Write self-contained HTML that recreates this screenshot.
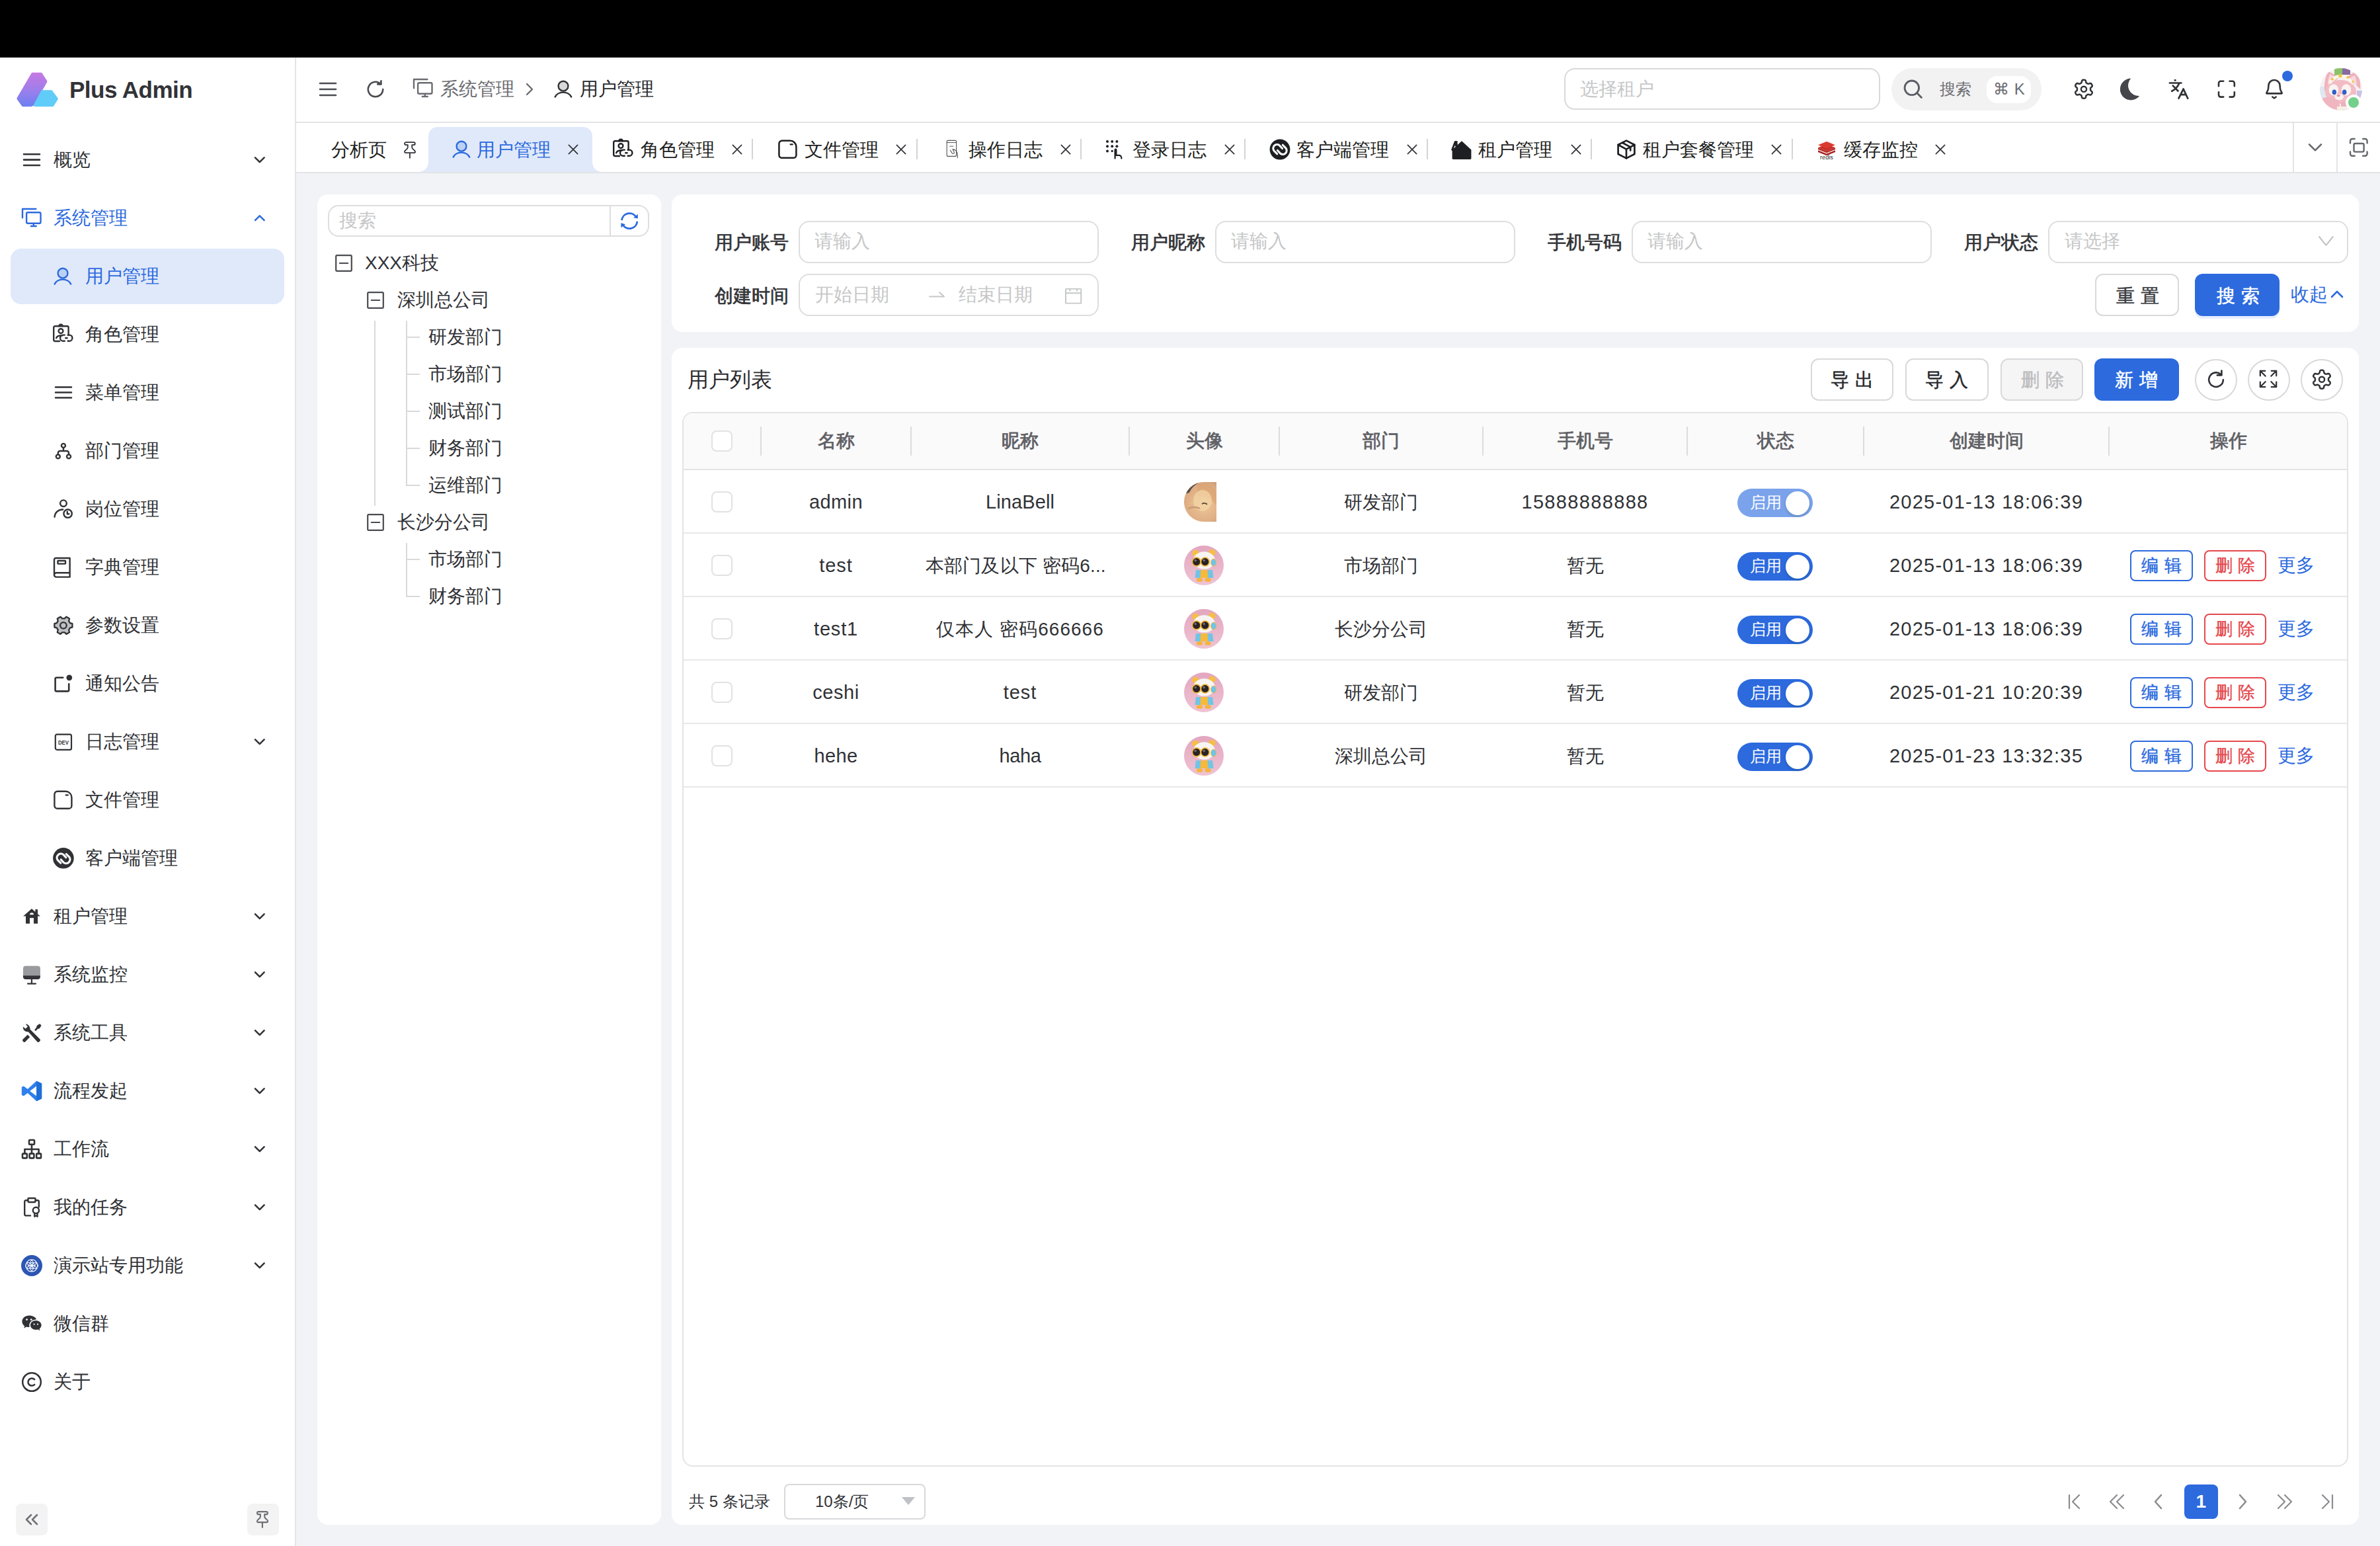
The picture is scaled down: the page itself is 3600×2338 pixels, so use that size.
<!DOCTYPE html>
<html><head><meta charset="utf-8"><style>
html,body{margin:0;padding:0;background:#000;width:3600px;height:2338px;overflow:hidden}
#z{zoom:2;position:absolute;left:0;top:0;width:1800px;height:1169px;background:#000}
#app{position:absolute;left:0;top:43px;width:1800px;height:1126px;background:#f1f3f6;font-family:"Liberation Sans",sans-serif;color:#303236;font-size:14px;overflow:hidden}
.a{position:absolute;display:block}
.t{position:absolute;white-space:nowrap;line-height:20px}
.side{position:absolute;left:0;top:0;width:223px;height:1126px;background:#fff;border-right:1px solid #e4e4e7}
.hdr{position:absolute;left:224px;top:0;width:1576px;height:49px;background:#fff;border-bottom:1px solid #e4e4e7}
.tabs{position:absolute;left:224px;top:50px;width:1576px;height:37px;background:#fff;border-bottom:1px solid #e4e4e7}
.card{position:absolute;background:#fff;border-radius:8px}
.box{position:absolute;box-sizing:border-box}
</style></head><body>
<div id="z"><div id="app">
<div class="side">
<svg class="a" style="left:12px;top:11px" width="34" height="28" viewBox="0 0 34 28">
<defs><linearGradient id="lg1" x1="0" y1="0" x2="0" y2="1"><stop offset="0" stop-color="#c479e4"/><stop offset=".55" stop-color="#9a7fec"/><stop offset="1" stop-color="#6f7ff0"/></linearGradient></defs>
<path d="M12.6 1.9h6.4l3.7 5.7-10 17.5-1.2.5H5.3l-3.6-5.1z" fill="url(#lg1)" stroke="url(#lg1)" stroke-width="2" stroke-linejoin="round"/>
<path d="M20 15.1h6.7l4.2 5.6-3.1 4.9H14.4z" fill="#60ccf8" stroke="#60ccf8" stroke-width="2" stroke-linejoin="round"/>
</svg>
<div class="t" style="left:52.5px;top:13px;font-size:17.5px;color:#323338;font-weight:700;line-height:24px;letter-spacing:-0.25px">Plus Admin</div>
<svg class="a" style="left:16px;top:70px;color:#303236" width="16" height="16" viewBox="0 0 16 16" fill="none" stroke="currentColor" stroke-width="1.2" stroke-linecap="round" stroke-linejoin="round" overflow="visible"><path d="M2 3.6h12M2 7.8h12M2 12h12" stroke-width="1.3"/></svg>
<div class="t" style="left:40.5px;top:68px;font-size:14px;color:#303236;">概览</div>
<svg class="a" style="left:192px;top:75.1px;color:#303236" width="9" height="6" viewBox="0 0 9 6" fill="none" stroke="currentColor" stroke-width="1.2" stroke-linecap="round" stroke-linejoin="round" overflow="visible"><path d="M1 1.2l3.4 3.4 3.4-3.4" stroke-width="1.25"/></svg>
<svg class="a" style="left:16px;top:114px;color:#2c6ade" width="16" height="16" viewBox="0 0 16 16" fill="none" stroke="currentColor" stroke-width="1.2" stroke-linecap="round" stroke-linejoin="round" overflow="visible"><path d="M1 7.6V1h10.2"/><rect x="4.05" y="3.6" width="10.7" height="8.3" rx="1"/><path d="M9.4 12v1.9M7.4 14h4"/></svg>
<div class="t" style="left:40.5px;top:112px;font-size:14px;color:#2c6ade;">系统管理</div>
<svg class="a" style="left:192px;top:119.1px;color:#2c6ade" width="9" height="6" viewBox="0 0 9 6" fill="none" stroke="currentColor" stroke-width="1.2" stroke-linecap="round" stroke-linejoin="round" overflow="visible"><path d="M1 4.6l3.4-3.4 3.4 3.4" stroke-width="1.25"/></svg>
<div class="box" style="left:8px;top:145px;width:207px;height:42px;border-radius:8px;background:#e0e9fa"></div>
<svg class="a" style="left:40px;top:158px;color:#2c6ade" width="16" height="16" viewBox="0 0 16 16" fill="none" stroke="currentColor" stroke-width="1.2" stroke-linecap="round" stroke-linejoin="round" overflow="visible"><circle cx="7.5" cy="5.6" r="3.7" fill="#bcd0f3"/><path d="M1.3 13.8C2.5 11.5 4.6 10.3 7.45 10.3S12.4 11.5 13.6 13.8"/></svg>
<div class="t" style="left:64.5px;top:156px;font-size:14px;color:#2c6ade;">用户管理</div>
<svg class="a" style="left:40px;top:202px;color:#303236" width="16" height="16" viewBox="0 0 16 16" fill="none" stroke="currentColor" stroke-width="1.2" stroke-linecap="round" stroke-linejoin="round" overflow="visible"><path d="M5 13H1.6a1 1 0 0 1-1-1V2.6a1 1 0 0 1 1-1h9.2a1 1 0 0 1 1 1v5.9"/><path d="M4.7 1.6a1.3 1.3 0 0 1 2.6 0"/><circle cx="6" cy="5.3" r="1.7"/><path d="M2.6 10.6c.3-1.3 1.8-2 4.6-2"/><path d="M8.9 8.3H7.8a2.3 2.3 0 0 0 0 4.6h1.1M11.3 8.3h1.1a2.3 2.3 0 0 1 0 4.6h-1.1M9.6 10.6h1.2"/></svg>
<div class="t" style="left:64.5px;top:200px;font-size:14px;color:#303236;">角色管理</div>
<svg class="a" style="left:40px;top:246px;color:#303236" width="16" height="16" viewBox="0 0 16 16" fill="none" stroke="currentColor" stroke-width="1.2" stroke-linecap="round" stroke-linejoin="round" overflow="visible"><path d="M2 3.7h12M2 7.8h12M2 11.8h12" stroke-width="1.25"/></svg>
<div class="t" style="left:64.5px;top:244px;font-size:14px;color:#303236;">菜单管理</div>
<svg class="a" style="left:40px;top:290px;color:#303236" width="16" height="16" viewBox="0 0 16 16" fill="none" stroke="currentColor" stroke-width="1.2" stroke-linecap="round" stroke-linejoin="round" overflow="visible"><circle cx="7.96" cy="3.95" r="1.5"/><circle cx="3.9" cy="12.2" r="1.5"/><circle cx="12" cy="12.2" r="1.5"/><path d="M7.96 5.45V8M3.9 10.7V9.5A1.5 1.5 0 0 1 5.4 8h5.1a1.5 1.5 0 0 1 1.5 1.5v1.2"/></svg>
<div class="t" style="left:64.5px;top:288px;font-size:14px;color:#303236;">部门管理</div>
<svg class="a" style="left:40px;top:334px;color:#303236" width="16" height="16" viewBox="0 0 16 16" fill="none" stroke="currentColor" stroke-width="1.2" stroke-linecap="round" stroke-linejoin="round" overflow="visible"><circle cx="7.96" cy="3.6" r="2.4"/><path d="M1.3 13.85C1.5 10.5 4 8.3 7.6 8.25"/><circle cx="11.3" cy="11.35" r="3.1"/><path d="M10.9 9.9v1.7h1.3"/></svg>
<div class="t" style="left:64.5px;top:332px;font-size:14px;color:#303236;">岗位管理</div>
<svg class="a" style="left:40px;top:378px;color:#303236" width="16" height="16" viewBox="0 0 16 16" fill="none" stroke="currentColor" stroke-width="1.2" stroke-linecap="round" stroke-linejoin="round" overflow="visible"><path d="M1 14.3V2.2a1.2 1.2 0 0 1 1.2-1.2h10.6v14.3H2.6A1.6 1.6 0 0 1 1 13.7a1.6 1.6 0 0 1 1.6-1.6h10.2"/><rect x="3.7" y="3" width="5.8" height="2.3" rx=".3"/></svg>
<div class="t" style="left:64.5px;top:376px;font-size:14px;color:#303236;">字典管理</div>
<svg class="a" style="left:40px;top:422px;color:#303236" width="16" height="16" viewBox="0 0 16 16" fill="none" stroke="currentColor" stroke-width="1.2" stroke-linecap="round" stroke-linejoin="round" overflow="visible"><path d="M12.91 6.05 L14.71 6.55 L14.71 9.29 L12.91 9.79 L12.05 11.28 L12.52 13.09 L10.14 14.46 L8.81 13.15 L7.09 13.15 L5.76 14.46 L3.38 13.09 L3.85 11.28 L2.99 9.79 L1.19 9.29 L1.19 6.55 L2.99 6.05 L3.85 4.56 L3.38 2.75 L5.76 1.38 L7.09 2.69 L8.81 2.69 L10.14 1.38 L12.52 2.75 L12.05 4.56Z" fill="#bfc0c4" stroke-width="1.15" stroke-linejoin="round"/><circle cx="7.95" cy="7.92" r="2.4" fill="#bfc0c4" stroke-width="1.15"/></svg>
<div class="t" style="left:64.5px;top:420px;font-size:14px;color:#303236;">参数设置</div>
<svg class="a" style="left:40px;top:466px;color:#303236" width="16" height="16" viewBox="0 0 16 16" fill="none" stroke="currentColor" stroke-width="1.2" stroke-linecap="round" stroke-linejoin="round" overflow="visible"><path d="M7.6 3.4H2.8a1 1 0 0 0-1 1v8.3a1 1 0 0 0 1 1h8.3a1 1 0 0 0 1-1V8.2" stroke-width="1.3"/><circle cx="12.4" cy="3.4" r="2.2" fill="currentColor" stroke="none"/></svg>
<div class="t" style="left:64.5px;top:464px;font-size:14px;color:#303236;">通知公告</div>
<svg class="a" style="left:40px;top:510px;color:#303236" width="16" height="16" viewBox="0 0 16 16" fill="none" stroke="currentColor" stroke-width="1.2" stroke-linecap="round" stroke-linejoin="round" overflow="visible"><rect x="1.9" y="2.3" width="12.1" height="11.6" rx="1.2" stroke-width="1.1"/><text x="8" y="9.9" font-size="4.6" font-weight="700" text-anchor="middle" fill="currentColor" stroke="none" font-family="Liberation Sans" textLength="8" lengthAdjust="spacingAndGlyphs">DEV</text></svg>
<div class="t" style="left:64.5px;top:508px;font-size:14px;color:#303236;">日志管理</div>
<svg class="a" style="left:192px;top:515.1px;color:#303236" width="9" height="6" viewBox="0 0 9 6" fill="none" stroke="currentColor" stroke-width="1.2" stroke-linecap="round" stroke-linejoin="round" overflow="visible"><path d="M1 1.2l3.4 3.4 3.4-3.4" stroke-width="1.25"/></svg>
<svg class="a" style="left:40px;top:554px;color:#303236" width="16" height="16" viewBox="0 0 16 16" fill="none" stroke="currentColor" stroke-width="1.2" stroke-linecap="round" stroke-linejoin="round" overflow="visible"><path d="M9.6 1.4H3.4A2.2 2.2 0 0 0 1.2 3.6v8.6a2.2 2.2 0 0 0 2.2 2.2h8.6a2.2 2.2 0 0 0 2.2-2.2V6a4.6 4.6 0 0 0-4.6-4.6z" stroke-width="1.2"/><path d="M9.8 4.2h1.6" stroke-width="1.1"/></svg>
<div class="t" style="left:64.5px;top:552px;font-size:14px;color:#303236;">文件管理</div>
<svg class="a" style="left:40px;top:598px;color:#303236" width="16" height="16" viewBox="0 0 16 16" fill="none" stroke="currentColor" stroke-width="1.2" stroke-linecap="round" stroke-linejoin="round" overflow="visible"><circle cx="7.95" cy="7.9" r="7.9" fill="currentColor" stroke="none"/><g stroke="#fff" stroke-width="1.55" fill="none"><path d="M5.9 11.6L3.6 9.3A3 3 0 0 1 7.9 5.2L9.9 7.4"/><path d="M5.9 11.6L3.6 9.3A3 3 0 0 1 7.9 5.2L9.9 7.4" transform="rotate(180 8 8.2)"/></g></svg>
<div class="t" style="left:64.5px;top:596px;font-size:14px;color:#303236;">客户端管理</div>
<svg class="a" style="left:16px;top:642px;color:#303236" width="16" height="16" viewBox="0 0 16 16" fill="none" stroke="currentColor" stroke-width="1.2" stroke-linecap="round" stroke-linejoin="round" overflow="visible"><path fill-rule="evenodd" d="M7.97 2.08L1.57 7.8H3.5v5.54h3.01V9.16h3.01v4.18h3.01V7.8h1.94L12.53 6.1V2.57h-1.84V4.5zM6.51 6.64a1.5 1.5 0 0 1 3.01 0z" fill="currentColor" stroke="none"/></svg>
<div class="t" style="left:40.5px;top:640px;font-size:14px;color:#303236;">租户管理</div>
<svg class="a" style="left:192px;top:647.1px;color:#303236" width="9" height="6" viewBox="0 0 9 6" fill="none" stroke="currentColor" stroke-width="1.2" stroke-linecap="round" stroke-linejoin="round" overflow="visible"><path d="M1 1.2l3.4 3.4 3.4-3.4" stroke-width="1.25"/></svg>
<svg class="a" style="left:16px;top:686px;color:#303236" width="16" height="16" viewBox="0 0 16 16" fill="none" stroke="currentColor" stroke-width="1.2" stroke-linecap="round" stroke-linejoin="round" overflow="visible"><path d="M1.47 3.4a2 2 0 0 1 2-2h9a2 2 0 0 1 2 2v5.2h-13z" fill="#9a9b9e" stroke="none"/><path d="M1.47 8.6h13v.9a2 2 0 0 1-2 2h-9a2 2 0 0 1-2-2z" fill="#333438" stroke="none"/><path d="M7.97 11.5v3.3M5 14.8h6" stroke="#333438" stroke-width="1.1"/></svg>
<div class="t" style="left:40.5px;top:684px;font-size:14px;color:#303236;">系统监控</div>
<svg class="a" style="left:192px;top:691.1px;color:#303236" width="9" height="6" viewBox="0 0 9 6" fill="none" stroke="currentColor" stroke-width="1.2" stroke-linecap="round" stroke-linejoin="round" overflow="visible"><path d="M1 1.2l3.4 3.4 3.4-3.4" stroke-width="1.25"/></svg>
<svg class="a" style="left:16px;top:730px;color:#303236" width="16" height="16" viewBox="0 0 16 16" fill="none" stroke="currentColor" stroke-width="1.2" stroke-linecap="round" stroke-linejoin="round" overflow="visible"><g fill="currentColor" stroke="none"><path d="M5.1 6.9L6.7 5.3 14.2 12.8a1 1 0 0 1 0 1.4l-.6.6a1 1 0 0 1-1.4 0z"/><path d="M1.4 3.4C1.2 5.6 2.9 7.3 5.1 7.2L6.8 5.4C6.9 3.3 5.3 1.4 3.3 1.3L5 3.2 3.3 4.9z"/><path d="M4.9 9.4l1.7 1.7-3.5 3.6a1 1 0 0 1-1.4 0l-.4-.4a1 1 0 0 1 0-1.4z"/><path d="M10.1 5.6l1.5-1.7c-.1-.6.2-1.2.6-1.6l1.9-1.2 1.2 1.3-1.1 1.9c-.4.5-1 .8-1.7.7L11 6.6z"/></g></svg>
<div class="t" style="left:40.5px;top:728px;font-size:14px;color:#303236;">系统工具</div>
<svg class="a" style="left:192px;top:735.1px;color:#303236" width="9" height="6" viewBox="0 0 9 6" fill="none" stroke="currentColor" stroke-width="1.2" stroke-linecap="round" stroke-linejoin="round" overflow="visible"><path d="M1 1.2l3.4 3.4 3.4-3.4" stroke-width="1.25"/></svg>
<svg class="a" style="left:16px;top:774px;color:#303236" width="16" height="16" viewBox="0 0 16 16" fill="none" stroke="currentColor" stroke-width="1.2" stroke-linecap="round" stroke-linejoin="round" overflow="visible"><path d="M11.6.4L15.6 2.3v11.4l-4 1.9L4.9 9.5 1.9 11.8.4 11V5l1.5-.8 3 2.3z" fill="#2f80ed" stroke="none"/><path d="M11.6 4.3L6.6 8l5 3.7z" fill="#fff" stroke="none"/><path d="M11.6.4L15.6 2.3v11.4l-4 1.9z" fill="#1f6fd6" stroke="none"/></svg>
<div class="t" style="left:40.5px;top:772px;font-size:14px;color:#303236;">流程发起</div>
<svg class="a" style="left:192px;top:779.1px;color:#303236" width="9" height="6" viewBox="0 0 9 6" fill="none" stroke="currentColor" stroke-width="1.2" stroke-linecap="round" stroke-linejoin="round" overflow="visible"><path d="M1 1.2l3.4 3.4 3.4-3.4" stroke-width="1.25"/></svg>
<svg class="a" style="left:16px;top:818px;color:#303236" width="16" height="16" viewBox="0 0 16 16" fill="none" stroke="currentColor" stroke-width="1.2" stroke-linecap="round" stroke-linejoin="round" overflow="visible"><rect x="6" y="1" width="4" height="3.4" rx=".5" stroke-width="1.3"/><rect x="1" y="11.3" width="3.4" height="3.4" rx=".5" stroke-width="1.3"/><rect x="6.3" y="11.3" width="3.4" height="3.4" rx=".5" stroke-width="1.3"/><rect x="11.6" y="11.3" width="3.4" height="3.4" rx=".5" stroke-width="1.3"/><path d="M8 4.4v6.9M2.7 11.3V8h10.6v3.3" stroke-width="1.3"/></svg>
<div class="t" style="left:40.5px;top:816px;font-size:14px;color:#303236;">工作流</div>
<svg class="a" style="left:192px;top:823.1px;color:#303236" width="9" height="6" viewBox="0 0 9 6" fill="none" stroke="currentColor" stroke-width="1.2" stroke-linecap="round" stroke-linejoin="round" overflow="visible"><path d="M1 1.2l3.4 3.4 3.4-3.4" stroke-width="1.25"/></svg>
<svg class="a" style="left:16px;top:862px;color:#303236" width="16" height="16" viewBox="0 0 16 16" fill="none" stroke="currentColor" stroke-width="1.2" stroke-linecap="round" stroke-linejoin="round" overflow="visible"><path d="M7 14.2H3.6a1 1 0 0 1-1-1V3.6a1 1 0 0 1 1-1h1.6M10.8 2.6h1.6a1 1 0 0 1 1 1v4" stroke-width="1.2"/><rect x="5.2" y="1" width="5.6" height="3" rx=".6" stroke-width="1.2"/><circle cx="11.2" cy="10.2" r="2.3" stroke-width="1.2"/><path d="M10.1 12.3v2.6l1.1-.7 1.1.7v-2.6" stroke-width="1.1"/></svg>
<div class="t" style="left:40.5px;top:860px;font-size:14px;color:#303236;">我的任务</div>
<svg class="a" style="left:192px;top:867.1px;color:#303236" width="9" height="6" viewBox="0 0 9 6" fill="none" stroke="currentColor" stroke-width="1.2" stroke-linecap="round" stroke-linejoin="round" overflow="visible"><path d="M1 1.2l3.4 3.4 3.4-3.4" stroke-width="1.25"/></svg>
<svg class="a" style="left:16px;top:906px;color:#303236" width="16" height="16" viewBox="0 0 16 16" fill="none" stroke="currentColor" stroke-width="1.2" stroke-linecap="round" stroke-linejoin="round" overflow="visible"><circle cx="8" cy="8" r="8" fill="#2d56b3" stroke="none"/><circle cx="10.30" cy="8.00" r="2.3" stroke="#fff" stroke-width=".5"/><circle cx="9.15" cy="9.99" r="2.3" stroke="#fff" stroke-width=".5"/><circle cx="6.85" cy="9.99" r="2.3" stroke="#fff" stroke-width=".5"/><circle cx="5.70" cy="8.00" r="2.3" stroke="#fff" stroke-width=".5"/><circle cx="6.85" cy="6.01" r="2.3" stroke="#fff" stroke-width=".5"/><circle cx="9.15" cy="6.01" r="2.3" stroke="#fff" stroke-width=".5"/><circle cx="8" cy="8" r="4.6" stroke="#fff" stroke-width=".5"/><circle cx="8" cy="8" r="2.3" stroke="#fff" stroke-width=".5"/></svg>
<div class="t" style="left:40.5px;top:904px;font-size:14px;color:#303236;">演示站专用功能</div>
<svg class="a" style="left:192px;top:911.1px;color:#303236" width="9" height="6" viewBox="0 0 9 6" fill="none" stroke="currentColor" stroke-width="1.2" stroke-linecap="round" stroke-linejoin="round" overflow="visible"><path d="M1 1.2l3.4 3.4 3.4-3.4" stroke-width="1.25"/></svg>
<svg class="a" style="left:16px;top:950px;color:#303236" width="16" height="16" viewBox="0 0 16 16" fill="none" stroke="currentColor" stroke-width="1.2" stroke-linecap="round" stroke-linejoin="round" overflow="visible"><path d="M6 1.8C3 1.8.7 3.8.7 6.2c0 1.4.7 2.6 1.9 3.4l-.5 1.6 1.9-1c.6.2 1.3.3 2 .3h.3A4 4 0 0 1 6.2 9c0-2.3 2.2-4.2 5-4.2h.3C11 3 8.8 1.8 6 1.8z" fill="currentColor" stroke="none"/><path d="M15.3 9c0-2-1.9-3.5-4.2-3.5S7 7 7 9s1.9 3.5 4.2 3.5c.5 0 1-.1 1.5-.2l1.5.8-.4-1.3c.9-.7 1.5-1.7 1.5-2.8z" fill="currentColor" stroke="none"/><circle cx="4.3" cy="4.8" r=".7" fill="#fff" stroke="none"/><circle cx="7.6" cy="4.8" r=".7" fill="#fff" stroke="none"/><circle cx="9.8" cy="8.3" r=".55" fill="#fff" stroke="none"/><circle cx="12.5" cy="8.3" r=".55" fill="#fff" stroke="none"/></svg>
<div class="t" style="left:40.5px;top:948px;font-size:14px;color:#303236;">微信群</div>
<svg class="a" style="left:16px;top:994px;color:#303236" width="16" height="16" viewBox="0 0 16 16" fill="none" stroke="currentColor" stroke-width="1.2" stroke-linecap="round" stroke-linejoin="round" overflow="visible"><circle cx="8" cy="8" r="6.9" stroke-width="1.25"/><path d="M10.1 6.1a2.8 2.8 0 1 0 0 3.8" stroke-width="1.25"/></svg>
<div class="t" style="left:40.5px;top:992px;font-size:14px;color:#303236;">关于</div>
<div class="box" style="left:12px;top:1094px;width:24px;height:24px;border-radius:4px;background:#f3f3f4"></div>
<svg class="a" style="left:16px;top:1098px;color:#707176" width="16" height="16" viewBox="0 0 16 16" fill="none" stroke="currentColor" stroke-width="1.2" stroke-linecap="round" stroke-linejoin="round" overflow="visible"><path d="M7.5 4.5L4 8l3.5 3.5M12 4.5L8.5 8l3.5 3.5" stroke-width="1.25"/></svg>
<div class="box" style="left:187px;top:1094px;width:24px;height:24px;border-radius:4px;background:#f3f3f4"></div>
<svg class="a" style="left:190.5px;top:1098px;color:#707176" width="16" height="16" viewBox="0 0 16 16" fill="none" stroke="currentColor" stroke-width="1.2" stroke-linecap="round" stroke-linejoin="round" overflow="visible"><path d="M5 2.1h5.9a1 1 0 0 1 0 2H9.6v1.8c0 .9.5 1.3 1.3 1.8.8.5 1.1.9 1.1 1.6a.8.8 0 0 1-.8.8H4.8a.8.8 0 0 1-.8-.8c0-.7.3-1.1 1.1-1.6.8-.5 1.3-.9 1.3-1.8V4.1H5a1 1 0 0 1 0-2zM7.95 10.1v3.8" stroke-width="1.1"/></svg>
</div>
<div class="hdr"></div>
<svg class="a" style="left:240px;top:16.5px;color:#4a4b50" width="16" height="16" viewBox="0 0 16 16" fill="none" stroke="currentColor" stroke-width="1.2" stroke-linecap="round" stroke-linejoin="round" overflow="visible"><path d="M2 3.5h12M2 8h12M2 12.5h12" stroke-width="1.3"/></svg>
<svg class="a" style="left:276px;top:16.5px;color:#4a4b50" width="16" height="16" viewBox="0 0 16 16" fill="none" stroke="currentColor" stroke-width="1.2" stroke-linecap="round" stroke-linejoin="round" overflow="visible"><path d="M13.6 8A5.6 5.6 0 1 1 11.9 4" stroke-width="1.3"/><path d="M12.2 1.6v2.6H9.6" stroke-width="1.3"/></svg>
<svg class="a" style="left:312px;top:16.2px;color:#6b6c72" width="16" height="16" viewBox="0 0 16 16" fill="none" stroke="currentColor" stroke-width="1.2" stroke-linecap="round" stroke-linejoin="round" overflow="visible"><path d="M1 7.6V1h10.2"/><rect x="4.05" y="3.6" width="10.7" height="8.3" rx="1"/><path d="M9.4 12v1.9M7.4 14h4"/></svg>
<div class="t" style="left:332.75px;top:14.5px;font-size:14px;color:#6b6c72;">系统管理</div>
<svg class="a" style="left:396px;top:19.5px;color:#6b6c72" width="10" height="10" viewBox="0 0 10 10" fill="none" stroke="currentColor" stroke-width="1.2" stroke-linecap="round" stroke-linejoin="round" overflow="visible"><path d="M2.5 1l4 4-4 4" stroke-width="1.2"/></svg>
<svg class="a" style="left:418.5px;top:16.5px;color:#303236" width="16" height="16" viewBox="0 0 16 16" fill="none" stroke="currentColor" stroke-width="1.2" stroke-linecap="round" stroke-linejoin="round" overflow="visible"><circle cx="7.5" cy="5.6" r="3.7" fill="#d8d8d8"/><path d="M1.3 13.8C2.5 11.5 4.6 10.3 7.45 10.3S12.4 11.5 13.6 13.8"/></svg>
<div class="t" style="left:438.5px;top:14.5px;font-size:14px;color:#26282c;">用户管理</div>
<div class="box" style="left:1183px;top:8.7px;width:239px;height:31.5px;border:1px solid #d9d9dc;border-radius:8px;background:#fff"></div>
<div class="t" style="left:1194.8px;top:14.5px;font-size:14px;color:#c6c7c8;">选择租户</div>
<div class="box" style="left:1430.5px;top:8.7px;width:113.5px;height:31.6px;border-radius:16px;background:#f2f2f3"></div>
<svg class="a" style="left:1439px;top:16.5px;color:#5c5d63" width="16" height="16" viewBox="0 0 16 16" fill="none" stroke="currentColor" stroke-width="1.2" stroke-linecap="round" stroke-linejoin="round" overflow="visible"><circle cx="6.9" cy="6.9" r="5.4" stroke-width="1.4"/><path d="M10.9 10.9l3.3 3.3" stroke-width="1.4"/></svg>
<div class="t" style="left:1467px;top:14.5px;font-size:12px;color:#6b6c72;">搜索</div>
<div class="box" style="left:1502.4px;top:14.5px;width:33.5px;height:20.5px;border-radius:8px;background:#fff"></div>
<div class="t" style="left:1507.5px;top:14.7px;font-size:12px;color:#6b6c72;letter-spacing:0.3px">&#8984; K</div>
<svg class="a" style="left:1568px;top:16.5px;color:#303236" width="16" height="16" viewBox="0 0 16 16" fill="none" stroke="currentColor" stroke-width="1.2" stroke-linecap="round" stroke-linejoin="round" overflow="visible"><path d="M13.01 7.89 L13.01 8.11 L13.01 8.33 L13.03 8.55 L13.11 8.79 L13.35 9.08 L13.79 9.44 L14.20 9.85 L14.38 10.22 L14.38 10.54 L14.29 10.83 L14.17 11.11 L14.03 11.38 L13.87 11.64 L13.69 11.88 L13.48 12.10 L13.20 12.26 L12.79 12.29 L12.23 12.13 L11.70 11.93 L11.33 11.87 L11.09 11.92 L10.88 12.02 L10.69 12.13 L10.50 12.24 L10.31 12.35 L10.12 12.46 L9.94 12.59 L9.77 12.78 L9.64 13.12 L9.54 13.69 L9.40 14.25 L9.17 14.59 L8.89 14.75 L8.60 14.82 L8.29 14.86 L7.99 14.87 L7.69 14.86 L7.38 14.82 L7.09 14.75 L6.81 14.59 L6.58 14.25 L6.44 13.69 L6.34 13.12 L6.21 12.78 L6.04 12.59 L5.86 12.46 L5.67 12.35 L5.48 12.24 L5.29 12.13 L5.10 12.02 L4.89 11.92 L4.65 11.87 L4.28 11.93 L3.75 12.13 L3.19 12.29 L2.78 12.26 L2.50 12.10 L2.29 11.88 L2.11 11.64 L1.95 11.38 L1.81 11.11 L1.69 10.83 L1.60 10.54 L1.60 10.22 L1.78 9.85 L2.19 9.44 L2.63 9.08 L2.87 8.79 L2.95 8.55 L2.97 8.33 L2.97 8.11 L2.97 7.89 L2.97 7.67 L2.97 7.45 L2.95 7.23 L2.87 6.99 L2.63 6.70 L2.19 6.34 L1.78 5.93 L1.60 5.56 L1.60 5.24 L1.69 4.95 L1.81 4.67 L1.95 4.40 L2.11 4.14 L2.29 3.90 L2.50 3.68 L2.78 3.52 L3.19 3.49 L3.75 3.65 L4.28 3.85 L4.65 3.91 L4.89 3.86 L5.10 3.76 L5.29 3.65 L5.48 3.54 L5.67 3.43 L5.86 3.32 L6.04 3.19 L6.21 3.00 L6.34 2.66 L6.44 2.09 L6.58 1.53 L6.81 1.19 L7.09 1.03 L7.38 0.96 L7.69 0.92 L7.99 0.91 L8.29 0.92 L8.60 0.96 L8.89 1.03 L9.17 1.19 L9.40 1.53 L9.54 2.09 L9.64 2.66 L9.77 3.00 L9.94 3.19 L10.12 3.32 L10.31 3.43 L10.50 3.54 L10.69 3.65 L10.88 3.76 L11.09 3.86 L11.33 3.91 L11.70 3.85 L12.23 3.65 L12.79 3.49 L13.20 3.52 L13.48 3.68 L13.69 3.90 L13.87 4.14 L14.03 4.40 L14.17 4.67 L14.29 4.95 L14.38 5.24 L14.38 5.56 L14.20 5.93 L13.79 6.34 L13.35 6.70 L13.11 6.99 L13.03 7.23 L13.01 7.45 L13.01 7.67Z" stroke-width="1.25"/><circle cx="7.99" cy="7.89" r="2.05" stroke-width="1.2"/></svg>
<svg class="a" style="left:1603px;top:16.5px;color:#4a4b50" width="16" height="16" viewBox="0 0 16 16" fill="none" stroke="currentColor" stroke-width="1.2" stroke-linecap="round" stroke-linejoin="round" overflow="visible"><path d="M8.6-.2A8.2 8.2 0 1 0 15.1 13 7.87 7.87 0 0 1 8.6-.2z" fill="#45464b" stroke="none"/></svg>
<svg class="a" style="left:1640px;top:16.5px;color:#303236" width="16" height="16" viewBox="0 0 16 16" fill="none" stroke="currentColor" stroke-width="1.2" stroke-linecap="round" stroke-linejoin="round" overflow="visible"><path d="M.94 3.25h8.75M4.9 1.2h.3M3.4 5.3l3.8 3.96M8.05 3.66c-1 2.3-3 4.5-5.45 5.74M7.77 14.86l3.53-7.1 3.3 7.1M9.4 12.1h3.8" stroke-width="1.37"/></svg>
<svg class="a" style="left:1676px;top:16.5px;color:#303236" width="16" height="16" viewBox="0 0 16 16" fill="none" stroke="currentColor" stroke-width="1.2" stroke-linecap="round" stroke-linejoin="round" overflow="visible"><path d="M2 5.6V3.4A1.5 1.5 0 0 1 3.5 1.9h2.1M10.3 1.9h2.1A1.5 1.5 0 0 1 13.9 3.4v2.2M13.9 10.1v2.2a1.5 1.5 0 0 1-1.5 1.5h-2.1M5.6 13.8H3.5A1.5 1.5 0 0 1 2 12.3v-2.2" stroke-width="1.3"/></svg>
<svg class="a" style="left:1712px;top:16.5px;color:#303236" width="16" height="16" viewBox="0 0 16 16" fill="none" stroke="currentColor" stroke-width="1.2" stroke-linecap="round" stroke-linejoin="round" overflow="visible"><path d="M2.3 11.2c-.6-.3 1.1-1.9 1.2-3.7l.2-2.2a4.3 4.3 0 0 1 8.6 0l.2 2.2c.1 1.8 1.8 3.4 1.2 3.7z" stroke-width="1.3"/><path d="M6.6 13.8l1.4 1 1.4-1" stroke-width="1.2"/></svg>
<div class="box" style="left:1726px;top:10.5px;width:8px;height:8px;border-radius:50%;background:#2c6ade"></div>
<svg class="a" style="left:1754.25px;top:8.4px" width="32" height="32" viewBox="0 0 32 32">
<defs><clipPath id="avc"><circle cx="16" cy="16" r="16"/></clipPath></defs>
<g clip-path="url(#avc)"><rect width="32" height="32" fill="#f7f1f2"/>
<path d="M11 0h6v6h-6z" fill="#8cc26b"/><path d="M17 0h6v5h-6z" fill="#6b4a8c" opacity=".8"/><path d="M0 14h5v10H0z" fill="#dfe8f0"/><path d="M28 17h4v8h-4z" fill="#c9c0e6"/>
<path d="M3.5 17.5C3 11 4.5 5 6.6 2.6c3 1.2 6 3.2 7.3 5.1z" fill="#eeb3bd"/><path d="M30.6 16C31 10 29.5 5 27.6 2.8c-2.8.8-5.5 2.4-6.2 4.2z" fill="#eeb3bd"/>
<path d="M6 14c0-5 1-8 1.8-9.5 2 1 4 2.4 5 3.6z" fill="#f7d9dd"/><path d="M28 14c0-4-1-7-1.6-8.4-1.8.6-3.6 1.8-4.4 3z" fill="#f7d9dd"/>
<ellipse cx="15.8" cy="18" rx="11.8" ry="9" fill="#f2bcc4"/>
<path d="M0 24c4-3 10-3 14 0l2 8H0z" fill="#f0b6bf"/><path d="M16 26c4-2 9-1 12 2v4H16z" fill="#eeb0ba"/>
<ellipse cx="10.4" cy="16.4" rx="3.6" ry="4.3" fill="#fbf3f1"/><ellipse cx="20" cy="16.4" rx="3.6" ry="4.3" fill="#fbf3f1"/>
<ellipse cx="14.6" cy="21.8" rx="3.4" ry="2.4" fill="#fbf3f1"/>
<ellipse cx="10.9" cy="18.2" rx="1.6" ry="1.9" fill="#2f5fc8"/><ellipse cx="18.6" cy="18.2" rx="1.6" ry="1.9" fill="#2f5fc8"/>
<ellipse cx="14.1" cy="20.7" rx="1.3" ry="1" fill="#e39aa6"/>
<path d="M7.4 11.5C9.5 7.5 13 6 15.4 6s6.3 1.4 9.3 5.2" stroke="#fbf6ee" stroke-width="2.2" fill="none"/>
<circle cx="9.4" cy="8.4" r="1" fill="#f2c53a"/><circle cx="15.4" cy="5.9" r="1.3" fill="#f2c53a"/><circle cx="21.2" cy="7" r="1" fill="#f2c53a"/><circle cx="25" cy="10.2" r=".8" fill="#f2c53a"/>
<path d="M13 29h10v3H13z" fill="#f4f0e6"/></g></svg>
<div class="box" style="left:1774px;top:28.4px;width:12px;height:12px;border-radius:50%;background:#74cf8b;border:2px solid #fff"></div>
<div class="tabs"></div>
<div class="t" style="left:250.5px;top:60.4px;font-size:14px;color:#1e1f22;">分析页</div>
<svg class="a" style="left:302px;top:62.3px;color:#303236" width="16" height="16" viewBox="0 0 16 16" fill="none" stroke="currentColor" stroke-width="1.2" stroke-linecap="round" stroke-linejoin="round" overflow="visible"><path d="M5 2.1h5.9a1 1 0 0 1 0 2H9.6v1.8c0 .9.5 1.3 1.3 1.8.8.5 1.1.9 1.1 1.6a.8.8 0 0 1-.8.8H4.8a.8.8 0 0 1-.8-.8c0-.7.3-1.1 1.1-1.6.8-.5 1.3-.9 1.3-1.8V4.1H5a1 1 0 0 1 0-2zM7.95 10.1v3.8" stroke-width=".9"/></svg>
<svg class="a" style="left:316px;top:53px" width="140" height="34" viewBox="0 0 140 34"><path d="M0 34c5 0 8-3 8-8V7c0-4 3-7 7-7h110c4 0 7 3 7 7v19c0 5 3 8 8 8z" fill="#e0e9fa"/></svg>
<svg class="a" style="left:341.5px;top:61.9px;color:#2c6ade" width="16" height="16" viewBox="0 0 16 16" fill="none" stroke="currentColor" stroke-width="1.2" stroke-linecap="round" stroke-linejoin="round" overflow="visible"><circle cx="7.5" cy="5.6" r="3.7" fill="#bcd0f3"/><path d="M1.3 13.8C2.5 11.5 4.6 10.3 7.45 10.3S12.4 11.5 13.6 13.8"/></svg>
<div class="t" style="left:360.35px;top:60.4px;font-size:14px;color:#2c6ade;">用户管理</div>
<svg class="a" style="left:428.5px;top:65.2px;color:#303236" width="10" height="10" viewBox="0 0 10 10" fill="none" stroke="currentColor" stroke-width="1.2" stroke-linecap="round" stroke-linejoin="round" overflow="visible"><path d="M1.7 1.7l6.6 6.6M8.3 1.7L1.7 8.3" stroke-width="0.85"/></svg>
<svg class="a" style="left:463.5px;top:61.9px;color:#1e1f22" width="16" height="16" viewBox="0 0 16 16" fill="none" stroke="currentColor" stroke-width="1.2" stroke-linecap="round" stroke-linejoin="round" overflow="visible"><path d="M5 13H1.6a1 1 0 0 1-1-1V2.6a1 1 0 0 1 1-1h9.2a1 1 0 0 1 1 1v5.9"/><path d="M4.7 1.6a1.3 1.3 0 0 1 2.6 0"/><circle cx="6" cy="5.3" r="1.7"/><path d="M2.6 10.6c.3-1.3 1.8-2 4.6-2"/><path d="M8.9 8.3H7.8a2.3 2.3 0 0 0 0 4.6h1.1M11.3 8.3h1.1a2.3 2.3 0 0 1 0 4.6h-1.1M9.6 10.6h1.2"/></svg>
<div class="t" style="left:484.5px;top:60.4px;font-size:14px;color:#1e1f22;">角色管理</div>
<svg class="a" style="left:552.5px;top:65.2px;color:#303236" width="10" height="10" viewBox="0 0 10 10" fill="none" stroke="currentColor" stroke-width="1.2" stroke-linecap="round" stroke-linejoin="round" overflow="visible"><path d="M1.7 1.7l6.6 6.6M8.3 1.7L1.7 8.3" stroke-width="0.85"/></svg>
<svg class="a" style="left:588px;top:61.9px;color:#1e1f22" width="16" height="16" viewBox="0 0 16 16" fill="none" stroke="currentColor" stroke-width="1.2" stroke-linecap="round" stroke-linejoin="round" overflow="visible"><path d="M9.6 1.4H3.4A2.2 2.2 0 0 0 1.2 3.6v8.6a2.2 2.2 0 0 0 2.2 2.2h8.6a2.2 2.2 0 0 0 2.2-2.2V6a4.6 4.6 0 0 0-4.6-4.6z" stroke-width="1.25"/><path d="M9.8 4.2h1.6" stroke-width="1.1"/></svg>
<div class="t" style="left:608.5px;top:60.4px;font-size:14px;color:#1e1f22;">文件管理</div>
<svg class="a" style="left:676.5px;top:65.2px;color:#303236" width="10" height="10" viewBox="0 0 10 10" fill="none" stroke="currentColor" stroke-width="1.2" stroke-linecap="round" stroke-linejoin="round" overflow="visible"><path d="M1.7 1.7l6.6 6.6M8.3 1.7L1.7 8.3" stroke-width="0.85"/></svg>
<svg class="a" style="left:713.5px;top:61.9px;color:#555" width="16" height="16" viewBox="0 0 16 16" fill="none" stroke="currentColor" stroke-width="1.2" stroke-linecap="round" stroke-linejoin="round" overflow="visible"><rect x="2.6" y="1.2" width="7.2" height="12" rx="1" stroke-width=".55"/><path d="M2.6 2.8h7.2" stroke-width=".5"/><path d="M5.2 8.6l1.4 2.2c.3.4.9.5 1.3.2.3-.3.4-.7.2-1L7 7.8c.6.1 1.8.3 2.7 1.3.6.7 1 1.6 1 3.6v1.6" stroke-width=".55"/><path d="M5 5.6h.3M6 5.6h.3M7 5.6h.3" stroke-width=".6"/></svg>
<div class="t" style="left:732.5px;top:60.4px;font-size:14px;color:#1e1f22;">操作日志</div>
<svg class="a" style="left:801.0px;top:65.2px;color:#303236" width="10" height="10" viewBox="0 0 10 10" fill="none" stroke="currentColor" stroke-width="1.2" stroke-linecap="round" stroke-linejoin="round" overflow="visible"><path d="M1.7 1.7l6.6 6.6M8.3 1.7L1.7 8.3" stroke-width="0.85"/></svg>
<svg class="a" style="left:835.5px;top:61.9px;color:#1e1f22" width="16" height="16" viewBox="0 0 16 16" fill="none" stroke="currentColor" stroke-width="1.2" stroke-linecap="round" stroke-linejoin="round" overflow="visible"><circle cx="2" cy="2" r="1" fill="currentColor" stroke="none"/><circle cx="5.6" cy="2" r="1" fill="currentColor" stroke="none"/><circle cx="9.2" cy="2" r="1" fill="currentColor" stroke="none"/><circle cx="2" cy="5.6" r="1" fill="currentColor" stroke="none"/><circle cx="5.6" cy="5.6" r="1" fill="currentColor" stroke="none"/><circle cx="9.2" cy="5.6" r="1" fill="currentColor" stroke="none"/><circle cx="2" cy="9.2" r="1" fill="currentColor" stroke="none"/><circle cx="5.6" cy="9.2" r=".8" fill="currentColor" stroke="none"/><path d="M7.8 14.8V8.2c0-.6.9-.6.9 0v4.2h2.2c.6 0 1.8.5 1.8 2.4" stroke-width="1.1"/></svg>
<div class="t" style="left:856.5px;top:60.4px;font-size:14px;color:#1e1f22;">登录日志</div>
<svg class="a" style="left:925.0px;top:65.2px;color:#303236" width="10" height="10" viewBox="0 0 10 10" fill="none" stroke="currentColor" stroke-width="1.2" stroke-linecap="round" stroke-linejoin="round" overflow="visible"><path d="M1.7 1.7l6.6 6.6M8.3 1.7L1.7 8.3" stroke-width="0.85"/></svg>
<svg class="a" style="left:960px;top:61.9px;color:#1e1f22" width="16" height="16" viewBox="0 0 16 16" fill="none" stroke="currentColor" stroke-width="1.2" stroke-linecap="round" stroke-linejoin="round" overflow="visible"><circle cx="8" cy="8" r="7.7" fill="currentColor" stroke="none"/><g stroke="#fff" stroke-width="1.5" fill="none"><path d="M5.9 11.4L3.7 9.2A2.9 2.9 0 0 1 7.9 5.2L9.8 7.3"/><path d="M5.9 11.4L3.7 9.2A2.9 2.9 0 0 1 7.9 5.2L9.8 7.3" transform="rotate(180 8 8)"/></g></svg>
<div class="t" style="left:980.5px;top:60.4px;font-size:14px;color:#1e1f22;">客户端管理</div>
<svg class="a" style="left:1063.0px;top:65.2px;color:#303236" width="10" height="10" viewBox="0 0 10 10" fill="none" stroke="currentColor" stroke-width="1.2" stroke-linecap="round" stroke-linejoin="round" overflow="visible"><path d="M1.7 1.7l6.6 6.6M8.3 1.7L1.7 8.3" stroke-width="0.85"/></svg>
<svg class="a" style="left:1097.5px;top:61.9px;color:#1e1f22" width="16" height="16" viewBox="0 0 16 16" fill="none" stroke="currentColor" stroke-width="1.2" stroke-linecap="round" stroke-linejoin="round" overflow="visible"><path d="M.8 8.2L8 1.6l7.2 6.6v6.6c0 .4-.3.7-.7.7H1.5c-.4 0-.7-.3-.7-.7z" fill="currentColor" stroke="none"/><path d="M.8 8.2L3 2.4" stroke-width="1.4"/><rect x="2.8" y="1.6" width="2" height="4" fill="currentColor" stroke="none"/></svg>
<div class="t" style="left:1118px;top:60.4px;font-size:14px;color:#1e1f22;">租户管理</div>
<svg class="a" style="left:1187.0px;top:65.2px;color:#303236" width="10" height="10" viewBox="0 0 10 10" fill="none" stroke="currentColor" stroke-width="1.2" stroke-linecap="round" stroke-linejoin="round" overflow="visible"><path d="M1.7 1.7l6.6 6.6M8.3 1.7L1.7 8.3" stroke-width="0.85"/></svg>
<svg class="a" style="left:1222px;top:61.9px;color:#1e1f22" width="16" height="16" viewBox="0 0 16 16" fill="none" stroke="currentColor" stroke-width="1.2" stroke-linecap="round" stroke-linejoin="round" overflow="visible"><path d="M8 1.3l6.2 3.2v7L8 14.7 1.8 11.5v-7z" stroke-width="1.35"/><path d="M1.8 4.5L8 7.8l6.2-3.3M8 7.8v6.9M4.9 2.9l6.2 3.3v2.6" stroke-width="1.35"/></svg>
<div class="t" style="left:1242.5px;top:60.4px;font-size:14px;color:#1e1f22;">租户套餐管理</div>
<svg class="a" style="left:1338.5px;top:65.2px;color:#303236" width="10" height="10" viewBox="0 0 10 10" fill="none" stroke="currentColor" stroke-width="1.2" stroke-linecap="round" stroke-linejoin="round" overflow="visible"><path d="M1.7 1.7l6.6 6.6M8.3 1.7L1.7 8.3" stroke-width="0.85"/></svg>
<svg class="a" style="left:1373.5px;top:61.9px;color:#1e1f22" width="16" height="16" viewBox="0 0 16 16" fill="none" stroke="currentColor" stroke-width="1.2" stroke-linecap="round" stroke-linejoin="round" overflow="visible"><path d="M1.5 6.6l6.5-2.6 6.5 2.6-6.5 2.6z" fill="#c8302b" stroke="none"/><path d="M1.5 4.6l6.5-2.6 6.5 2.6-6.5 2.6z" fill="#dc3a30" stroke="none"/><path d="M1.5 8.6l6.5 2.6 6.5-2.6v1.4l-6.5 2.6-6.5-2.6z" fill="#a8221f" stroke="none"/><path d="M1.5 6.6l6.5 2.6 6.5-2.6V8l-6.5 2.6L1.5 8z" fill="#b92a25" stroke="none"/><text x="8" y="15.6" font-size="4.6" text-anchor="middle" fill="#333" stroke="none" font-family="Liberation Sans">redis</text></svg>
<div class="t" style="left:1394.25px;top:60.4px;font-size:14px;color:#1e1f22;">缓存监控</div>
<svg class="a" style="left:1462.5px;top:65.2px;color:#303236" width="10" height="10" viewBox="0 0 10 10" fill="none" stroke="currentColor" stroke-width="1.2" stroke-linecap="round" stroke-linejoin="round" overflow="visible"><path d="M1.7 1.7l6.6 6.6M8.3 1.7L1.7 8.3" stroke-width="0.85"/></svg>
<div class="box" style="left:568.65px;top:62px;width:1px;height:15.5px;background:#d4d4d8"></div>
<div class="box" style="left:692.8px;top:62px;width:1px;height:15.5px;background:#d4d4d8"></div>
<div class="box" style="left:817.15px;top:62px;width:1px;height:15.5px;background:#d4d4d8"></div>
<div class="box" style="left:941.0px;top:62px;width:1px;height:15.5px;background:#d4d4d8"></div>
<div class="box" style="left:1079.0px;top:62px;width:1px;height:15.5px;background:#d4d4d8"></div>
<div class="box" style="left:1202.85px;top:62px;width:1px;height:15.5px;background:#d4d4d8"></div>
<div class="box" style="left:1355.0px;top:62px;width:1px;height:15.5px;background:#d4d4d8"></div>
<div class="box" style="left:1734.2px;top:50px;width:1px;height:37px;background:#e4e4e7"></div>
<div class="box" style="left:1767.2px;top:50px;width:1px;height:37px;background:#e4e4e7"></div>
<svg class="a" style="left:1745.5px;top:65.2px;color:#66676d" width="11" height="7" viewBox="0 0 11 7" fill="none" stroke="currentColor" stroke-width="1.2" stroke-linecap="round" stroke-linejoin="round" overflow="visible"><path d="M1 1.2l4.5 4.5L10 1.2" stroke-width="1.25"/></svg>
<svg class="a" style="left:1776px;top:61px;color:#66676d" width="15" height="15" viewBox="0 0 15 15" fill="none" stroke="currentColor" stroke-width="1.2" stroke-linecap="round" stroke-linejoin="round" overflow="visible"><path d="M1.5 4.2V2.6A1.6 1.6 0 0 1 3.1 1H4.8M11.1 1h1.6a1.6 1.6 0 0 1 1.6 1.6v1.6M14.3 10.7v1.6a1.6 1.6 0 0 1-1.6 1.6h-1.6M4.8 13.9H3.1a1.6 1.6 0 0 1-1.6-1.6v-1.6" stroke-width="1.2"/><rect x="4.25" y="4.5" width="7.55" height="6.3" rx="1" stroke-width="1.2"/></svg>
<div class="card" style="left:240px;top:104px;width:260px;height:1006px"></div>
<div class="box" style="left:248px;top:112px;width:243px;height:24px;border:1px solid #dedee1;border-radius:8px;background:#fff"></div>
<div class="box" style="left:461px;top:112px;width:1px;height:24px;background:#dedee1"></div>
<div class="t" style="left:256.7px;top:114px;font-size:14px;color:#c6c7c8;">搜索</div>
<svg class="a" style="left:468px;top:116px;color:#2c6ade" width="16" height="16" viewBox="0 0 16 16" fill="none" stroke="currentColor" stroke-width="1.2" stroke-linecap="round" stroke-linejoin="round" overflow="visible"><path d="M2.2 7.6A5.9 5.9 0 0 1 13.1 5.1M13.95 8.4A5.9 5.9 0 0 1 3 10.9" stroke-width="1.4" stroke-linecap="butt"/><path d="M14.4 2.9v3.3l-3.3-.6z" fill="currentColor" stroke="none"/><path d="M1.7 13.1V9.6l3.3 1z" fill="currentColor" stroke="none"/></svg>
<svg class="a" style="left:253.5px;top:149.5px;color:#4a4b50" width="13" height="13" viewBox="0 0 13 13" fill="none" stroke="currentColor" stroke-width="1.2" stroke-linecap="round" stroke-linejoin="round" overflow="visible"><rect x=".6" y=".6" width="11.8" height="11.8" rx=".8" stroke-width="1.1"/><path d="M3.4 6.5h6.2" stroke-width="1.1"/></svg>
<div class="t" style="left:276px;top:146px;font-size:14px;color:#303236;">XXX科技</div>
<svg class="a" style="left:277.7px;top:177.5px;color:#4a4b50" width="13" height="13" viewBox="0 0 13 13" fill="none" stroke="currentColor" stroke-width="1.2" stroke-linecap="round" stroke-linejoin="round" overflow="visible"><rect x=".6" y=".6" width="11.8" height="11.8" rx=".8" stroke-width="1.1"/><path d="M3.4 6.5h6.2" stroke-width="1.1"/></svg>
<div class="t" style="left:300.4px;top:174px;font-size:14px;color:#303236;">深圳总公司</div>
<div class="t" style="left:324px;top:202px;font-size:14px;color:#303236;">研发部门</div>
<div class="box" style="left:307px;top:211.5px;width:10.5px;height:1px;background:#d9d9dc"></div>
<div class="t" style="left:324px;top:230px;font-size:14px;color:#303236;">市场部门</div>
<div class="box" style="left:307px;top:239.5px;width:10.5px;height:1px;background:#d9d9dc"></div>
<div class="t" style="left:324px;top:258px;font-size:14px;color:#303236;">测试部门</div>
<div class="box" style="left:307px;top:267.5px;width:10.5px;height:1px;background:#d9d9dc"></div>
<div class="t" style="left:324px;top:286px;font-size:14px;color:#303236;">财务部门</div>
<div class="box" style="left:307px;top:295.5px;width:10.5px;height:1px;background:#d9d9dc"></div>
<div class="t" style="left:324px;top:314px;font-size:14px;color:#303236;">运维部门</div>
<div class="box" style="left:307px;top:323.5px;width:10.5px;height:1px;background:#d9d9dc"></div>
<svg class="a" style="left:277.7px;top:345.5px;color:#4a4b50" width="13" height="13" viewBox="0 0 13 13" fill="none" stroke="currentColor" stroke-width="1.2" stroke-linecap="round" stroke-linejoin="round" overflow="visible"><rect x=".6" y=".6" width="11.8" height="11.8" rx=".8" stroke-width="1.1"/><path d="M3.4 6.5h6.2" stroke-width="1.1"/></svg>
<div class="t" style="left:300.4px;top:342px;font-size:14px;color:#303236;">长沙分公司</div>
<div class="t" style="left:324px;top:370px;font-size:14px;color:#303236;">市场部门</div>
<div class="box" style="left:307px;top:379.5px;width:10.5px;height:1px;background:#d9d9dc"></div>
<div class="t" style="left:324px;top:398px;font-size:14px;color:#303236;">财务部门</div>
<div class="box" style="left:307px;top:407.5px;width:10.5px;height:1px;background:#d9d9dc"></div>
<div class="box" style="left:283px;top:199.5px;width:1px;height:140px;background:#d9d9dc"></div>
<div class="box" style="left:307px;top:199.5px;width:1px;height:125px;background:#d9d9dc"></div>
<div class="box" style="left:307px;top:367.5px;width:1px;height:41px;background:#d9d9dc"></div>
<div class="card" style="left:508px;top:104px;width:1276px;height:104px"></div>
<div class="t" style="left:540.5px;top:130.4px;font-size:14px;color:#333438;-webkit-text-stroke:.35px #333438">用户账号</div>
<div class="box" style="left:604px;top:124px;width:227px;height:32px;border:1px solid #dedee1;border-radius:8px;background:#fff"></div>
<div class="t" style="left:616px;top:129.7px;font-size:14px;color:#c6c7c8;">请输入</div>
<div class="t" style="left:855.5px;top:130.4px;font-size:14px;color:#333438;-webkit-text-stroke:.35px #333438">用户昵称</div>
<div class="box" style="left:919px;top:124px;width:227px;height:32px;border:1px solid #dedee1;border-radius:8px;background:#fff"></div>
<div class="t" style="left:931px;top:129.7px;font-size:14px;color:#c6c7c8;">请输入</div>
<div class="t" style="left:1170.5px;top:130.4px;font-size:14px;color:#333438;-webkit-text-stroke:.35px #333438">手机号码</div>
<div class="box" style="left:1234px;top:124px;width:227px;height:32px;border:1px solid #dedee1;border-radius:8px;background:#fff"></div>
<div class="t" style="left:1246px;top:129.7px;font-size:14px;color:#c6c7c8;">请输入</div>
<div class="t" style="left:1485.5px;top:130.4px;font-size:14px;color:#333438;-webkit-text-stroke:.35px #333438">用户状态</div>
<div class="box" style="left:1549px;top:124px;width:227px;height:32px;border:1px solid #dedee1;border-radius:8px;background:#fff"></div>
<div class="t" style="left:1561.5px;top:129.7px;font-size:14px;color:#c6c7c8;">请选择</div>
<svg class="a" style="left:1753px;top:135px;color:#c0c1c4" width="12" height="9" viewBox="0 0 12 9" fill="none" stroke="currentColor" stroke-width="1.2" stroke-linecap="round" stroke-linejoin="round" overflow="visible"><path d="M1 1l5.2 6.4L11.4 1" stroke-width="1"/></svg>
<div class="t" style="left:540.5px;top:170.9px;font-size:14px;color:#333438;-webkit-text-stroke:.35px #333438">创建时间</div>
<div class="box" style="left:604px;top:164px;width:227px;height:32px;border:1px solid #dedee1;border-radius:8px;background:#fff"></div>
<div class="t" style="left:616.5px;top:170.2px;font-size:14px;color:#c6c7c8;">开始日期</div>
<svg class="a" style="left:702px;top:176.5px;color:#c6c7c8" width="13" height="7" viewBox="0 0 13 7" fill="none" stroke="currentColor" stroke-width="1.2" stroke-linecap="round" stroke-linejoin="round" overflow="visible"><path d="M1 4.8h11M8.6 1.6L12 4.8" stroke-width="1"/></svg>
<div class="t" style="left:724.75px;top:170.2px;font-size:14px;color:#c6c7c8;">结束日期</div>
<svg class="a" style="left:804.5px;top:172.8px;color:#c6c7c8" width="15" height="15" viewBox="0 0 16 16" fill="none" stroke="currentColor" stroke-width="1.2" stroke-linecap="round" stroke-linejoin="round" overflow="visible"><rect x="1.6" y="2.6" width="12.4" height="11.6" rx=".4" stroke-width="1.05"/><path d="M1.6 6h12.4M5 2.6v1.6M10.6 2.6v1.6" stroke-width="1.05"/></svg>
<div class="box" style="left:1584.5px;top:164px;width:63.5px;height:32px;border:1px solid #d9d9dc;border-radius:6px;background:#fff"></div>
<div class="t" style="left:1600.5px;top:170.9px;font-size:14px;color:#3a3b3f;letter-spacing:4.5px;-webkit-text-stroke:.25px #3a3b3f">重置</div>
<div class="box" style="left:1660px;top:164px;width:64px;height:32px;border-radius:6px;background:#2c6ade;box-shadow:0 2px 0 rgba(5,95,255,.1)"></div>
<div class="t" style="left:1676.3px;top:170.9px;font-size:14px;color:#fff;letter-spacing:4.5px;-webkit-text-stroke:.25px #fff">搜索</div>
<div class="t" style="left:1732.5px;top:170.2px;font-size:14px;color:#2c6ade;">收起</div>
<svg class="a" style="left:1762.5px;top:176px;color:#2c6ade" width="10" height="7" viewBox="0 0 10 7" fill="none" stroke="currentColor" stroke-width="1.2" stroke-linecap="round" stroke-linejoin="round" overflow="visible"><path d="M1 5.5L5 1.5l4 4" stroke-width="1.3"/></svg>
<div class="card" style="left:508px;top:220px;width:1276px;height:890px"></div>
<div class="t" style="left:520.2px;top:234px;font-size:16px;color:#2a2b2f;line-height:20px;">用户列表</div>
<div class="box" style="left:1369.3px;top:228px;width:62.6px;height:32px;border:1px solid #d9d9dc;border-radius:6px;background:#fff"></div>
<div class="t" style="left:1384.6px;top:234.5px;font-size:14px;color:#26282c;letter-spacing:4.5px;-webkit-text-stroke:.25px #26282c">导出</div>
<div class="box" style="left:1440.75px;top:228px;width:63.25px;height:32px;border:1px solid #d9d9dc;border-radius:6px;background:#fff"></div>
<div class="t" style="left:1456.05px;top:234.5px;font-size:14px;color:#26282c;letter-spacing:4.5px;-webkit-text-stroke:.25px #26282c">导入</div>
<div class="box" style="left:1513px;top:228px;width:62.5px;height:32px;border:1px solid #d9d9dc;border-radius:6px;background:#f5f5f5"></div>
<div class="t" style="left:1528.3px;top:234.5px;font-size:14px;color:#bdbdc0;letter-spacing:4.5px;-webkit-text-stroke:.25px #bdbdc0">删除</div>
<div class="box" style="left:1584px;top:228px;width:63.85px;height:32px;border-radius:6px;background:#2c6ade"></div>
<div class="t" style="left:1599.3px;top:234.5px;font-size:14px;color:#fff;letter-spacing:4.5px;-webkit-text-stroke:.25px #fff">新增</div>
<div class="box" style="left:1660px;top:228.3px;width:31.8px;height:31.8px;border:1px solid #d9d9dc;border-radius:50%;background:#fff"></div>
<svg class="a" style="left:1668px;top:236.2px;color:#303236" width="16" height="16" viewBox="0 0 16 16" fill="none" stroke="currentColor" stroke-width="1.2" stroke-linecap="round" stroke-linejoin="round" overflow="visible"><path d="M13.4 8.2A5.4 5.4 0 1 1 11.6 4.1" stroke-width="1.3"/><path d="M12.2 1.3v3.4H8.9" stroke-width="1.3"/></svg>
<div class="box" style="left:1700px;top:228.3px;width:31.8px;height:31.8px;border:1px solid #d9d9dc;border-radius:50%;background:#fff"></div>
<svg class="a" style="left:1708px;top:236.2px;color:#303236" width="15" height="15" viewBox="0 0 16 16" fill="none" stroke="currentColor" stroke-width="1.2" stroke-linecap="round" stroke-linejoin="round" overflow="visible"><path d="M1.5 5.5v-4h4M1.5 1.5l4.2 4.2M14.5 5.5v-4h-4M14.5 1.5l-4.2 4.2M1.5 10.5v4h4M1.5 14.5l4.2-4.2M14.5 10.5v4h-4M14.5 14.5l-4.2-4.2" stroke-width="1.2"/></svg>
<div class="box" style="left:1740px;top:228.3px;width:31.8px;height:31.8px;border:1px solid #d9d9dc;border-radius:50%;background:#fff"></div>
<svg class="a" style="left:1748px;top:236.2px;color:#303236" width="16" height="16" viewBox="0 0 16 16" fill="none" stroke="currentColor" stroke-width="1.2" stroke-linecap="round" stroke-linejoin="round" overflow="visible"><path d="M13.01 7.89 L13.01 8.11 L13.01 8.33 L13.03 8.55 L13.11 8.79 L13.35 9.08 L13.79 9.44 L14.20 9.85 L14.38 10.22 L14.38 10.54 L14.29 10.83 L14.17 11.11 L14.03 11.38 L13.87 11.64 L13.69 11.88 L13.48 12.10 L13.20 12.26 L12.79 12.29 L12.23 12.13 L11.70 11.93 L11.33 11.87 L11.09 11.92 L10.88 12.02 L10.69 12.13 L10.50 12.24 L10.31 12.35 L10.12 12.46 L9.94 12.59 L9.77 12.78 L9.64 13.12 L9.54 13.69 L9.40 14.25 L9.17 14.59 L8.89 14.75 L8.60 14.82 L8.29 14.86 L7.99 14.87 L7.69 14.86 L7.38 14.82 L7.09 14.75 L6.81 14.59 L6.58 14.25 L6.44 13.69 L6.34 13.12 L6.21 12.78 L6.04 12.59 L5.86 12.46 L5.67 12.35 L5.48 12.24 L5.29 12.13 L5.10 12.02 L4.89 11.92 L4.65 11.87 L4.28 11.93 L3.75 12.13 L3.19 12.29 L2.78 12.26 L2.50 12.10 L2.29 11.88 L2.11 11.64 L1.95 11.38 L1.81 11.11 L1.69 10.83 L1.60 10.54 L1.60 10.22 L1.78 9.85 L2.19 9.44 L2.63 9.08 L2.87 8.79 L2.95 8.55 L2.97 8.33 L2.97 8.11 L2.97 7.89 L2.97 7.67 L2.97 7.45 L2.95 7.23 L2.87 6.99 L2.63 6.70 L2.19 6.34 L1.78 5.93 L1.60 5.56 L1.60 5.24 L1.69 4.95 L1.81 4.67 L1.95 4.40 L2.11 4.14 L2.29 3.90 L2.50 3.68 L2.78 3.52 L3.19 3.49 L3.75 3.65 L4.28 3.85 L4.65 3.91 L4.89 3.86 L5.10 3.76 L5.29 3.65 L5.48 3.54 L5.67 3.43 L5.86 3.32 L6.04 3.19 L6.21 3.00 L6.34 2.66 L6.44 2.09 L6.58 1.53 L6.81 1.19 L7.09 1.03 L7.38 0.96 L7.69 0.92 L7.99 0.91 L8.29 0.92 L8.60 0.96 L8.89 1.03 L9.17 1.19 L9.40 1.53 L9.54 2.09 L9.64 2.66 L9.77 3.00 L9.94 3.19 L10.12 3.32 L10.31 3.43 L10.50 3.54 L10.69 3.65 L10.88 3.76 L11.09 3.86 L11.33 3.91 L11.70 3.85 L12.23 3.65 L12.79 3.49 L13.20 3.52 L13.48 3.68 L13.69 3.90 L13.87 4.14 L14.03 4.40 L14.17 4.67 L14.29 4.95 L14.38 5.24 L14.38 5.56 L14.20 5.93 L13.79 6.34 L13.35 6.70 L13.11 6.99 L13.03 7.23 L13.01 7.45 L13.01 7.67Z" stroke-width="1.25"/><circle cx="7.99" cy="7.89" r="2.05" stroke-width="1.2"/></svg>
<div class="box" style="left:516px;top:268.5px;width:1260px;height:797.5px;border:1px solid #e4e4e7;border-radius:8px;background:#fff;overflow:hidden"><div class="box" style="left:0;top:0;width:100%;height:43px;background:#fafafa;border-bottom:1px solid #e4e4e7"></div></div>
<div class="box" style="left:575.0px;top:279.5px;width:1px;height:22px;background:#dcdcdf"></div>
<div class="box" style="left:688.5px;top:279.5px;width:1px;height:22px;background:#dcdcdf"></div>
<div class="box" style="left:853.5px;top:279.5px;width:1px;height:22px;background:#dcdcdf"></div>
<div class="box" style="left:967.0px;top:279.5px;width:1px;height:22px;background:#dcdcdf"></div>
<div class="box" style="left:1121.0px;top:279.5px;width:1px;height:22px;background:#dcdcdf"></div>
<div class="box" style="left:1275.5px;top:279.5px;width:1px;height:22px;background:#dcdcdf"></div>
<div class="box" style="left:1409.0px;top:279.5px;width:1px;height:22px;background:#dcdcdf"></div>
<div class="box" style="left:1594.5px;top:279.5px;width:1px;height:22px;background:#dcdcdf"></div>
<div class="box" style="left:538px;top:282.5px;width:16px;height:16px;border:1px solid #e2e2e5;border-radius:4px;background:#fff"></div>
<div class="t" style="left:532.25px;top:280.7px;width:200px;text-align:center;color:#5f6065;-webkit-text-stroke:.4px #5f6065">名称</div>
<div class="t" style="left:671.5px;top:280.7px;width:200px;text-align:center;color:#5f6065;-webkit-text-stroke:.4px #5f6065">昵称</div>
<div class="t" style="left:810.75px;top:280.7px;width:200px;text-align:center;color:#5f6065;-webkit-text-stroke:.4px #5f6065">头像</div>
<div class="t" style="left:944.5px;top:280.7px;width:200px;text-align:center;color:#5f6065;-webkit-text-stroke:.4px #5f6065">部门</div>
<div class="t" style="left:1098.75px;top:280.7px;width:200px;text-align:center;color:#5f6065;-webkit-text-stroke:.4px #5f6065">手机号</div>
<div class="t" style="left:1242.75px;top:280.7px;width:200px;text-align:center;color:#5f6065;-webkit-text-stroke:.4px #5f6065">状态</div>
<div class="t" style="left:1402.25px;top:280.7px;width:200px;text-align:center;color:#5f6065;-webkit-text-stroke:.4px #5f6065">创建时间</div>
<div class="t" style="left:1585.25px;top:280.7px;width:200px;text-align:center;color:#5f6065;-webkit-text-stroke:.4px #5f6065">操作</div>
<div class="box" style="left:517px;top:359.5px;width:1258px;height:1px;background:#e8e8ea"></div>
<div class="box" style="left:538px;top:328.5px;width:16px;height:16px;border:1px solid #e2e2e5;border-radius:4px;background:#fff"></div>
<div class="t" style="left:482.25px;top:327.0px;width:300px;text-align:center;color:#303236;font-size:14.5px;letter-spacing:0.2px;margin-top:-.4px">admin</div>
<div class="t" style="left:621.5px;top:327.0px;width:300px;text-align:center;color:#303236;font-size:14.5px;letter-spacing:0.06px;margin-top:-.4px">LinaBell</div>
<svg class="a" style="left:895.5px;top:321.5px" width="30" height="30" viewBox="0 0 30 30"><defs><clipPath id="cav895_321"><path d="M15 0A15 15 0 1 0 15 30h9.5V0z"/></clipPath>
<radialGradient id="cav895_321g" cx=".5" cy=".55" r=".65"><stop offset="0" stop-color="#eec99a"/><stop offset=".7" stop-color="#dfae84"/><stop offset="1" stop-color="#c99a78"/></radialGradient></defs>
<g clip-path="url(#cav895_321)"><rect width="30" height="30" fill="url(#cav895_321g)"/><path d="M0 0h12Q6 3 4 8L0 9z" fill="#5a5048"/><path d="M10 2q10-3 15 6v10q-6-8-15-7z" fill="#d9a070" opacity=".6"/>
<ellipse cx="14" cy="14" rx="7" ry="8" fill="#f3d3a4" opacity=".8"/><path d="M13.5 16.6q2-1.4 4 .3" stroke="#5b4638" stroke-width=".9" fill="none"/><path d="M3 20q5-2 9 0" stroke="#c89a76" stroke-width="1.2" fill="none"/></g></svg>
<div class="t" style="left:894.5px;top:327.0px;width:300px;text-align:center;color:#303236;">研发部门</div>
<div class="t" style="left:1048.75px;top:327.0px;width:300px;text-align:center;color:#303236;font-size:14.5px;letter-spacing:0.67px;margin-top:-.4px">15888888888</div>
<div class="t" style="left:1352.25px;top:327.0px;width:300px;text-align:center;color:#303236;font-size:14.5px;letter-spacing:.63px;margin-top:-.4px">2025-01-13 18:06:39</div>
<div class="box" style="left:1314px;top:326.5px;width:56.75px;height:21.5px;border-radius:11px;background:#7aa3eb"></div>
<div class="box" style="left:1350.5px;top:328.5px;width:18px;height:18px;border-radius:50%;background:#fff;box-shadow:0 1px 2px rgba(0,35,11,.2)"></div>
<div class="t" style="left:1323.5px;top:327.2px;font-size:12px;color:#fff;">启用</div>
<div class="box" style="left:517px;top:407.5px;width:1258px;height:1px;background:#e8e8ea"></div>
<div class="box" style="left:538px;top:376.5px;width:16px;height:16px;border:1px solid #e2e2e5;border-radius:4px;background:#fff"></div>
<div class="t" style="left:482.25px;top:375.0px;width:300px;text-align:center;color:#303236;font-size:14.5px;letter-spacing:0.47px;margin-top:-.4px">test</div>
<div class="t" style="left:618.2px;top:375.0px;width:300px;text-align:center;color:#303236;font-size:14px;letter-spacing:0.08px">本部门及以下 密码6...</div>
<svg class="a" style="left:895.5px;top:369.5px" width="30" height="30" viewBox="0 0 30 30"><defs><clipPath id="cav895_369"><circle cx="15" cy="15" r="15"/></clipPath>
<linearGradient id="cav895_369b" x1="0" y1="0" x2="0" y2="1"><stop offset="0" stop-color="#e3a6bf"/><stop offset="1" stop-color="#efc3d3"/></linearGradient></defs>
<g clip-path="url(#cav895_369)"><rect width="30" height="30" fill="url(#cav895_369b)"/>
<circle cx="8.7" cy="5.8" r="2.6" fill="#f4bf45"/><circle cx="21.2" cy="5.3" r="2.6" fill="#f4bf45"/>
<ellipse cx="15.2" cy="11.2" rx="8.2" ry="6.6" fill="#f7f5f3"/>
<path d="M9 18.5h12.5l.8 6H8.2z" fill="#72c4e6"/><path d="M12.6 18.5h5.2l.4 6h-6z" fill="#f6b93b"/>
<rect x="9.4" y="24.6" width="4.6" height="2.8" rx="1.2" fill="#f4b43a"/><rect x="15.8" y="24.6" width="4.6" height="2.8" rx="1.2" fill="#f4b43a"/>
<circle cx="9.4" cy="12.3" r="3.2" fill="#2a2225" stroke="#efb640" stroke-width=".9"/><circle cx="15.9" cy="12.3" r="3.2" fill="#2a2225" stroke="#efb640" stroke-width=".9"/>
<circle cx="8.6" cy="11.3" r=".9" fill="#8a8a8a" opacity=".7"/><circle cx="15.1" cy="11.3" r=".9" fill="#8a8a8a" opacity=".7"/>
<ellipse cx="22.3" cy="12.8" rx="2" ry="2.7" fill="#6ec5e8" stroke="#efb640" stroke-width=".5"/></g></svg>
<div class="t" style="left:894.5px;top:375.0px;width:300px;text-align:center;color:#303236;">市场部门</div>
<div class="t" style="left:1048.75px;top:375.0px;width:300px;text-align:center;color:#303236;">暂无</div>
<div class="t" style="left:1352.25px;top:375.0px;width:300px;text-align:center;color:#303236;font-size:14.5px;letter-spacing:.63px;margin-top:-.4px">2025-01-13 18:06:39</div>
<div class="box" style="left:1314px;top:374.5px;width:56.75px;height:21.5px;border-radius:11px;background:#2c6ade"></div>
<div class="box" style="left:1350.5px;top:376.5px;width:18px;height:18px;border-radius:50%;background:#fff;box-shadow:0 1px 2px rgba(0,35,11,.2)"></div>
<div class="t" style="left:1323.5px;top:375.2px;font-size:12px;color:#fff;">启用</div>
<div class="box" style="left:1611px;top:372.75px;width:47.25px;height:23.5px;border:1px solid #2c6ade;border-radius:4px;background:#fff"></div>
<div class="t" style="left:1619.5px;top:374.5px;font-size:13px;color:#2c6ade;letter-spacing:4.42px;-webkit-text-stroke:.2px #2c6ade">编辑</div>
<div class="box" style="left:1666.75px;top:372.75px;width:47.25px;height:23.5px;border:1px solid #e5484d;border-radius:4px;background:#fff"></div>
<div class="t" style="left:1675.25px;top:374.5px;font-size:13px;color:#e5484d;letter-spacing:4.42px;-webkit-text-stroke:.2px #e5484d">删除</div>
<div class="t" style="left:1722.5px;top:374.5px;font-size:14px;color:#2c6ade;">更多</div>
<div class="box" style="left:517px;top:455.5px;width:1258px;height:1px;background:#e8e8ea"></div>
<div class="box" style="left:538px;top:424.5px;width:16px;height:16px;border:1px solid #e2e2e5;border-radius:4px;background:#fff"></div>
<div class="t" style="left:482.25px;top:423.0px;width:300px;text-align:center;color:#303236;font-size:14.5px;letter-spacing:0.4px;margin-top:-.4px">test1</div>
<div class="t" style="left:621.5px;top:423.0px;width:300px;text-align:center;color:#303236;font-size:14px;letter-spacing:0.52px">仅本人 密码666666</div>
<svg class="a" style="left:895.5px;top:417.5px" width="30" height="30" viewBox="0 0 30 30"><defs><clipPath id="cav895_417"><circle cx="15" cy="15" r="15"/></clipPath>
<linearGradient id="cav895_417b" x1="0" y1="0" x2="0" y2="1"><stop offset="0" stop-color="#e3a6bf"/><stop offset="1" stop-color="#efc3d3"/></linearGradient></defs>
<g clip-path="url(#cav895_417)"><rect width="30" height="30" fill="url(#cav895_417b)"/>
<circle cx="8.7" cy="5.8" r="2.6" fill="#f4bf45"/><circle cx="21.2" cy="5.3" r="2.6" fill="#f4bf45"/>
<ellipse cx="15.2" cy="11.2" rx="8.2" ry="6.6" fill="#f7f5f3"/>
<path d="M9 18.5h12.5l.8 6H8.2z" fill="#72c4e6"/><path d="M12.6 18.5h5.2l.4 6h-6z" fill="#f6b93b"/>
<rect x="9.4" y="24.6" width="4.6" height="2.8" rx="1.2" fill="#f4b43a"/><rect x="15.8" y="24.6" width="4.6" height="2.8" rx="1.2" fill="#f4b43a"/>
<circle cx="9.4" cy="12.3" r="3.2" fill="#2a2225" stroke="#efb640" stroke-width=".9"/><circle cx="15.9" cy="12.3" r="3.2" fill="#2a2225" stroke="#efb640" stroke-width=".9"/>
<circle cx="8.6" cy="11.3" r=".9" fill="#8a8a8a" opacity=".7"/><circle cx="15.1" cy="11.3" r=".9" fill="#8a8a8a" opacity=".7"/>
<ellipse cx="22.3" cy="12.8" rx="2" ry="2.7" fill="#6ec5e8" stroke="#efb640" stroke-width=".5"/></g></svg>
<div class="t" style="left:894.5px;top:423.0px;width:300px;text-align:center;color:#303236;">长沙分公司</div>
<div class="t" style="left:1048.75px;top:423.0px;width:300px;text-align:center;color:#303236;">暂无</div>
<div class="t" style="left:1352.25px;top:423.0px;width:300px;text-align:center;color:#303236;font-size:14.5px;letter-spacing:.63px;margin-top:-.4px">2025-01-13 18:06:39</div>
<div class="box" style="left:1314px;top:422.5px;width:56.75px;height:21.5px;border-radius:11px;background:#2c6ade"></div>
<div class="box" style="left:1350.5px;top:424.5px;width:18px;height:18px;border-radius:50%;background:#fff;box-shadow:0 1px 2px rgba(0,35,11,.2)"></div>
<div class="t" style="left:1323.5px;top:423.2px;font-size:12px;color:#fff;">启用</div>
<div class="box" style="left:1611px;top:420.75px;width:47.25px;height:23.5px;border:1px solid #2c6ade;border-radius:4px;background:#fff"></div>
<div class="t" style="left:1619.5px;top:422.5px;font-size:13px;color:#2c6ade;letter-spacing:4.42px;-webkit-text-stroke:.2px #2c6ade">编辑</div>
<div class="box" style="left:1666.75px;top:420.75px;width:47.25px;height:23.5px;border:1px solid #e5484d;border-radius:4px;background:#fff"></div>
<div class="t" style="left:1675.25px;top:422.5px;font-size:13px;color:#e5484d;letter-spacing:4.42px;-webkit-text-stroke:.2px #e5484d">删除</div>
<div class="t" style="left:1722.5px;top:422.5px;font-size:14px;color:#2c6ade;">更多</div>
<div class="box" style="left:517px;top:503.5px;width:1258px;height:1px;background:#e8e8ea"></div>
<div class="box" style="left:538px;top:472.5px;width:16px;height:16px;border:1px solid #e2e2e5;border-radius:4px;background:#fff"></div>
<div class="t" style="left:482.25px;top:471.0px;width:300px;text-align:center;color:#303236;font-size:14.5px;letter-spacing:0.29px;margin-top:-.4px">ceshi</div>
<div class="t" style="left:621.5px;top:471.0px;width:300px;text-align:center;color:#303236;font-size:14.5px;letter-spacing:0.47px;margin-top:-.4px">test</div>
<svg class="a" style="left:895.5px;top:465.5px" width="30" height="30" viewBox="0 0 30 30"><defs><clipPath id="cav895_465"><circle cx="15" cy="15" r="15"/></clipPath>
<linearGradient id="cav895_465b" x1="0" y1="0" x2="0" y2="1"><stop offset="0" stop-color="#e3a6bf"/><stop offset="1" stop-color="#efc3d3"/></linearGradient></defs>
<g clip-path="url(#cav895_465)"><rect width="30" height="30" fill="url(#cav895_465b)"/>
<circle cx="8.7" cy="5.8" r="2.6" fill="#f4bf45"/><circle cx="21.2" cy="5.3" r="2.6" fill="#f4bf45"/>
<ellipse cx="15.2" cy="11.2" rx="8.2" ry="6.6" fill="#f7f5f3"/>
<path d="M9 18.5h12.5l.8 6H8.2z" fill="#72c4e6"/><path d="M12.6 18.5h5.2l.4 6h-6z" fill="#f6b93b"/>
<rect x="9.4" y="24.6" width="4.6" height="2.8" rx="1.2" fill="#f4b43a"/><rect x="15.8" y="24.6" width="4.6" height="2.8" rx="1.2" fill="#f4b43a"/>
<circle cx="9.4" cy="12.3" r="3.2" fill="#2a2225" stroke="#efb640" stroke-width=".9"/><circle cx="15.9" cy="12.3" r="3.2" fill="#2a2225" stroke="#efb640" stroke-width=".9"/>
<circle cx="8.6" cy="11.3" r=".9" fill="#8a8a8a" opacity=".7"/><circle cx="15.1" cy="11.3" r=".9" fill="#8a8a8a" opacity=".7"/>
<ellipse cx="22.3" cy="12.8" rx="2" ry="2.7" fill="#6ec5e8" stroke="#efb640" stroke-width=".5"/></g></svg>
<div class="t" style="left:894.5px;top:471.0px;width:300px;text-align:center;color:#303236;">研发部门</div>
<div class="t" style="left:1048.75px;top:471.0px;width:300px;text-align:center;color:#303236;">暂无</div>
<div class="t" style="left:1352.25px;top:471.0px;width:300px;text-align:center;color:#303236;font-size:14.5px;letter-spacing:.63px;margin-top:-.4px">2025-01-21 10:20:39</div>
<div class="box" style="left:1314px;top:470.5px;width:56.75px;height:21.5px;border-radius:11px;background:#2c6ade"></div>
<div class="box" style="left:1350.5px;top:472.5px;width:18px;height:18px;border-radius:50%;background:#fff;box-shadow:0 1px 2px rgba(0,35,11,.2)"></div>
<div class="t" style="left:1323.5px;top:471.2px;font-size:12px;color:#fff;">启用</div>
<div class="box" style="left:1611px;top:468.75px;width:47.25px;height:23.5px;border:1px solid #2c6ade;border-radius:4px;background:#fff"></div>
<div class="t" style="left:1619.5px;top:470.5px;font-size:13px;color:#2c6ade;letter-spacing:4.42px;-webkit-text-stroke:.2px #2c6ade">编辑</div>
<div class="box" style="left:1666.75px;top:468.75px;width:47.25px;height:23.5px;border:1px solid #e5484d;border-radius:4px;background:#fff"></div>
<div class="t" style="left:1675.25px;top:470.5px;font-size:13px;color:#e5484d;letter-spacing:4.42px;-webkit-text-stroke:.2px #e5484d">删除</div>
<div class="t" style="left:1722.5px;top:470.5px;font-size:14px;color:#2c6ade;">更多</div>
<div class="box" style="left:517px;top:551.5px;width:1258px;height:1px;background:#e8e8ea"></div>
<div class="box" style="left:538px;top:520.5px;width:16px;height:16px;border:1px solid #e2e2e5;border-radius:4px;background:#fff"></div>
<div class="t" style="left:482.25px;top:519.0px;width:300px;text-align:center;color:#303236;font-size:14.5px;letter-spacing:0.17px;margin-top:-.4px">hehe</div>
<div class="t" style="left:621.5px;top:519.0px;width:300px;text-align:center;color:#303236;font-size:14.5px;letter-spacing:-0.18px;margin-top:-.4px">haha</div>
<svg class="a" style="left:895.5px;top:513.5px" width="30" height="30" viewBox="0 0 30 30"><defs><clipPath id="cav895_513"><circle cx="15" cy="15" r="15"/></clipPath>
<linearGradient id="cav895_513b" x1="0" y1="0" x2="0" y2="1"><stop offset="0" stop-color="#e3a6bf"/><stop offset="1" stop-color="#efc3d3"/></linearGradient></defs>
<g clip-path="url(#cav895_513)"><rect width="30" height="30" fill="url(#cav895_513b)"/>
<circle cx="8.7" cy="5.8" r="2.6" fill="#f4bf45"/><circle cx="21.2" cy="5.3" r="2.6" fill="#f4bf45"/>
<ellipse cx="15.2" cy="11.2" rx="8.2" ry="6.6" fill="#f7f5f3"/>
<path d="M9 18.5h12.5l.8 6H8.2z" fill="#72c4e6"/><path d="M12.6 18.5h5.2l.4 6h-6z" fill="#f6b93b"/>
<rect x="9.4" y="24.6" width="4.6" height="2.8" rx="1.2" fill="#f4b43a"/><rect x="15.8" y="24.6" width="4.6" height="2.8" rx="1.2" fill="#f4b43a"/>
<circle cx="9.4" cy="12.3" r="3.2" fill="#2a2225" stroke="#efb640" stroke-width=".9"/><circle cx="15.9" cy="12.3" r="3.2" fill="#2a2225" stroke="#efb640" stroke-width=".9"/>
<circle cx="8.6" cy="11.3" r=".9" fill="#8a8a8a" opacity=".7"/><circle cx="15.1" cy="11.3" r=".9" fill="#8a8a8a" opacity=".7"/>
<ellipse cx="22.3" cy="12.8" rx="2" ry="2.7" fill="#6ec5e8" stroke="#efb640" stroke-width=".5"/></g></svg>
<div class="t" style="left:894.5px;top:519.0px;width:300px;text-align:center;color:#303236;">深圳总公司</div>
<div class="t" style="left:1048.75px;top:519.0px;width:300px;text-align:center;color:#303236;">暂无</div>
<div class="t" style="left:1352.25px;top:519.0px;width:300px;text-align:center;color:#303236;font-size:14.5px;letter-spacing:.63px;margin-top:-.4px">2025-01-23 13:32:35</div>
<div class="box" style="left:1314px;top:518.5px;width:56.75px;height:21.5px;border-radius:11px;background:#2c6ade"></div>
<div class="box" style="left:1350.5px;top:520.5px;width:18px;height:18px;border-radius:50%;background:#fff;box-shadow:0 1px 2px rgba(0,35,11,.2)"></div>
<div class="t" style="left:1323.5px;top:519.2px;font-size:12px;color:#fff;">启用</div>
<div class="box" style="left:1611px;top:516.75px;width:47.25px;height:23.5px;border:1px solid #2c6ade;border-radius:4px;background:#fff"></div>
<div class="t" style="left:1619.5px;top:518.5px;font-size:13px;color:#2c6ade;letter-spacing:4.42px;-webkit-text-stroke:.2px #2c6ade">编辑</div>
<div class="box" style="left:1666.75px;top:516.75px;width:47.25px;height:23.5px;border:1px solid #e5484d;border-radius:4px;background:#fff"></div>
<div class="t" style="left:1675.25px;top:518.5px;font-size:13px;color:#e5484d;letter-spacing:4.42px;-webkit-text-stroke:.2px #e5484d">删除</div>
<div class="t" style="left:1722.5px;top:518.5px;font-size:14px;color:#2c6ade;">更多</div>
<div class="t" style="left:521px;top:1082.5px;font-size:12px;color:#303236;">共 5 条记录</div>
<div class="box" style="left:593px;top:1079px;width:107px;height:27px;border:1px solid #d9d9dc;border-radius:4px;background:#fff"></div>
<div class="t" style="left:616.5px;top:1082.5px;font-size:12px;color:#303236;">10条/页</div>
<svg class="a" style="left:682px;top:1089px" width="10" height="6" viewBox="0 0 10 6"><path d="M0 0h10L5 6z" fill="#c0c1c6"/></svg>
<svg class="a" style="left:1563.5px;top:1086.5px;color:#8c8c90" width="12" height="12" viewBox="0 0 12 12" fill="none" stroke="currentColor" stroke-width="1.2" stroke-linecap="round" stroke-linejoin="round" overflow="visible"><path d="M1.5 1v10M9 1L4 6l5 5" stroke-width="1.1"/></svg>
<svg class="a" style="left:1595px;top:1086.5px;color:#8c8c90" width="12" height="12" viewBox="0 0 12 12" fill="none" stroke="currentColor" stroke-width="1.2" stroke-linecap="round" stroke-linejoin="round" overflow="visible"><path d="M6 1L1 6l5 5M11 1L6 6l5 5" stroke-width="1.1"/></svg>
<svg class="a" style="left:1628.5px;top:1086.5px;color:#8c8c90" width="12" height="12" viewBox="0 0 12 12" fill="none" stroke="currentColor" stroke-width="1.2" stroke-linecap="round" stroke-linejoin="round" overflow="visible"><path d="M6 1L1.5 6 6 11" stroke-width="1.3"/></svg>
<div class="box" style="left:1652px;top:1079.5px;width:25.3px;height:26px;border-radius:4px;background:#2c6ade"></div>
<div class="t" style="left:1652px;top:1082.5px;width:25.3px;text-align:center;color:#fff;font-weight:700">1</div>
<svg class="a" style="left:1692.5px;top:1086.5px;color:#8c8c90" width="12" height="12" viewBox="0 0 12 12" fill="none" stroke="currentColor" stroke-width="1.2" stroke-linecap="round" stroke-linejoin="round" overflow="visible"><path d="M1.5 1L6 6l-4.5 5" stroke-width="1.3"/></svg>
<svg class="a" style="left:1722px;top:1086.5px;color:#8c8c90" width="12" height="12" viewBox="0 0 12 12" fill="none" stroke="currentColor" stroke-width="1.2" stroke-linecap="round" stroke-linejoin="round" overflow="visible"><path d="M1 1l5 5-5 5M6 1l5 5-5 5" stroke-width="1.1"/></svg>
<svg class="a" style="left:1753.5px;top:1086.5px;color:#8c8c90" width="12" height="12" viewBox="0 0 12 12" fill="none" stroke="currentColor" stroke-width="1.2" stroke-linecap="round" stroke-linejoin="round" overflow="visible"><path d="M10.5 1v10M3 1l5 5-5 5" stroke-width="1.1"/></svg>
</div><div style="position:absolute;left:0;top:0;width:1800px;height:43.5px;background:#000"></div></div></body></html>
